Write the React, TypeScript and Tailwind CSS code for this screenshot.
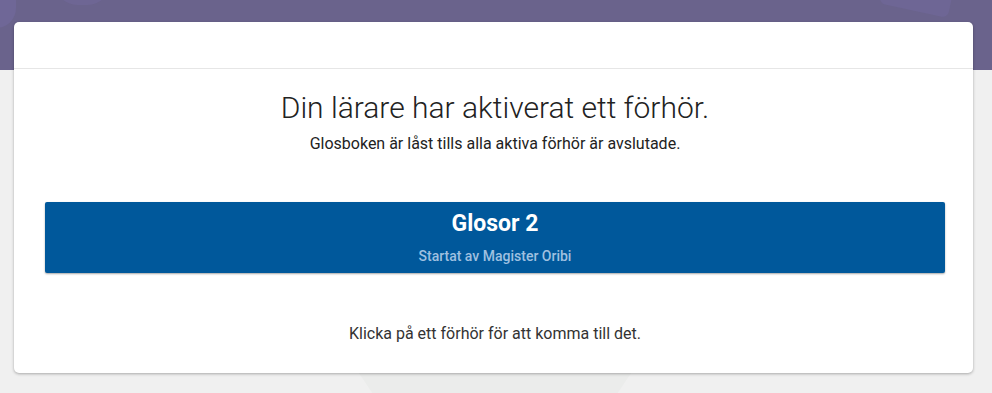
export default function App() {
  return (
    <div className="relative min-h-[393px] w-full overflow-hidden bg-[#f0f0f0] font-['Roboto',sans-serif]">
      {/* decorative background */}
      <div className="absolute inset-x-0 top-0 h-[70px] bg-[#6a638c]">
        <div className="absolute -left-6 -top-8 h-[60px] w-[40px] rounded-full bg-[#6f6797]" />
        <div className="absolute left-[55px] -top-10 h-[45px] w-[55px] rounded-full bg-[#6e6694]" />
        <div className="absolute right-[40px] -top-6 h-[35px] w-[70px] rotate-12 rounded-md bg-[#6e6695]" />
      </div>
      <div className="absolute left-[350px] top-[360px] h-[60px] w-[290px] bg-[#ebeceb] [clip-path:polygon(0_0,100%_0,86%_100%,14%_100%)]" />

      <div className="relative pl-[14px] pr-[19px] pt-[22px] pb-[20px]">
        <div className="rounded-[5px] bg-white shadow-[0_1px_3px_rgba(0,0,0,0.3)]">
          <div className="h-[47px] border-b border-[#e6e6e6]" />
          <div className="flex flex-col items-center pl-[31px] pr-[28px] pt-[20px] pb-[29px]">
            <h1 className="text-[30px] font-light leading-[38px] text-[#222]">
              Din lärare har aktiverat ett förhör.
            </h1>
            <p className="mt-[7px] text-[16px] leading-[20px] text-[#222]">
              Glosboken är låst tills alla aktiva förhör är avslutade.
            </p>
            <button className="mt-[48px] flex h-[71px] w-full flex-col items-center rounded-[2px] bg-[#00589b] pt-[8px] shadow-[0_1px_2px_rgba(0,0,0,0.35)]">
              <span className="text-[23px] font-bold leading-[28px] text-white">Glosor 2</span>
              <span className="mt-[10px] text-[14px] font-medium leading-[17px] text-[#9fc0e0]">
                Startat av Magister Oribi
              </span>
            </button>
            <p className="mt-[51px] text-[16px] leading-[20px] text-[#333]">
              Klicka på ett förhör för att komma till det.
            </p>
          </div>
        </div>
      </div>
    </div>
  );
}
